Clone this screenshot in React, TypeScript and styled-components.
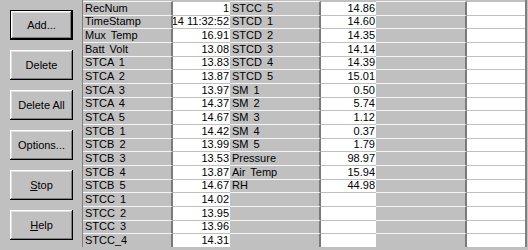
import React from "react";
import styled, { createGlobalStyle, css } from "styled-components";

const Global = createGlobalStyle`
  html, body { margin: 0; padding: 0; background: #c0c0c0; }
  body { font-family: "Liberation Sans", Arial, sans-serif; }
`;

const Window = styled.div`
  width: 528px;
  height: 250px;
  display: flex;
  background: #c0c0c0;
  overflow: hidden;
  font-family: "Liberation Sans", Arial, sans-serif;
  font-size: 11px;
  color: #000;
`;

const ButtonPanel = styled.div`
  box-sizing: border-box;
  width: 82px;
  padding: 10px 0 0 10px;
  display: flex;
  flex-direction: column;
  gap: 10px;
  flex: none;
`;

const Button = styled.button<{ $default?: boolean }>`
  width: 63px;
  height: 30px;
  padding: 0;
  margin: 0;
  background: #c0c0c0;
  font-family: "Liberation Sans", Arial, sans-serif;
  font-size: 11px;
  color: #000;
  border: none;
  box-shadow: inset -1px -1px #000, inset 1px 1px #fff, inset -2px -2px #808080,
    inset 2px 2px #dfdfdf;
  ${(p) =>
    p.$default &&
    css`
      box-shadow: inset 0 0 0 1px #000, inset -2px -2px #000, inset 2px 2px #fff,
        inset -3px -3px #808080, inset 3px 3px #dfdfdf;
    `}
  u { text-decoration: underline; }
`;

const GridFrame = styled.div`
  flex: none;
  padding-top: 1px;
  border-left: 1px solid #808080;
  border-right: 2px solid #808080;
  height: 246px;
`;

const Grid = styled.div`
  display: grid;
  grid-template-columns: 90px 57px 91px 55px 91px 58px;
  grid-template-rows: repeat(18, 1fr);
  height: 246px;
  grid-auto-flow: column;
`;

const Label = styled.div`
  background: #c0c0c0;
  border-top: 1px solid #f4f4f4;
  border-right: 2px solid #7a7a7a;
  padding-left: 2px;
  display: flex;
  align-items: center;
  white-space: nowrap;
  overflow: hidden;
  word-spacing: 2px;
  line-height: 1;
`;

const Value = styled.div`
  background: #fff;
  border-top: 1px solid #c0c0c0;
  padding-right: 1px;
  display: flex;
  align-items: center;
  justify-content: flex-end;
  white-space: nowrap;
  overflow: hidden;
  line-height: 1;
`;

const Column = styled.div`
  display: contents;
`;

const col1Labels = [
  "RecNum", "TimeStamp", "Mux Temp", "Batt Volt",
  "STCA 1", "STCA 2", "STCA 3", "STCA 4", "STCA 5",
  "STCB 1", "STCB 2", "STCB 3", "STCB 4", "STCB 5",
  "STCC 1", "STCC 2", "STCC 3", "STCC_4",
];
const col1Values = [
  "1", "14 11:32:52", "16.91", "13.08", "13.83", "13.87", "13.97", "14.37", "14.67",
  "14.42", "13.99", "13.53", "13.87", "14.67", "14.02", "13.95", "13.96", "14.31",
];
const col2Labels = [
  "STCC 5", "STCD 1", "STCD 2", "STCD 3", "STCD 4", "STCD 5",
  "SM 1", "SM 2", "SM 3", "SM 4", "SM 5", "Pressure", "Air Temp", "RH",
  "", "", "", "",
];
const col2Values = [
  "14.86", "14.60", "14.35", "14.14", "14.39", "15.01", "0.50", "5.74", "1.12",
  "0.37", "1.79", "98.97", "15.94", "44.98", "", "", "", "",
];
const empty = Array(18).fill("");

const columns: [string[], string[]][] = [
  [col1Labels, col1Values],
  [col2Labels, col2Values],
  [empty, empty],
];

export default function App() {
  return (
    <Window>
      <Global />
      <ButtonPanel>
        <Button $default>Add...</Button>
        <Button>Delete</Button>
        <Button>Delete All</Button>
        <Button>Options...</Button>
        <Button>
          <u>S</u>top
        </Button>
        <Button>
          <u>H</u>elp
        </Button>
      </ButtonPanel>
      <GridFrame>
        <Grid>
          {columns.map(([labels, values], ci) => (
            <Column key={ci}>
              {labels.map((l, i) => (
                <Label key={"l" + i}>{l}</Label>
              ))}
              {values.map((v, i) => (
                <Value key={"v" + i}>{v}</Value>
              ))}
            </Column>
          ))}
        </Grid>
      </GridFrame>
    </Window>
  );
}
